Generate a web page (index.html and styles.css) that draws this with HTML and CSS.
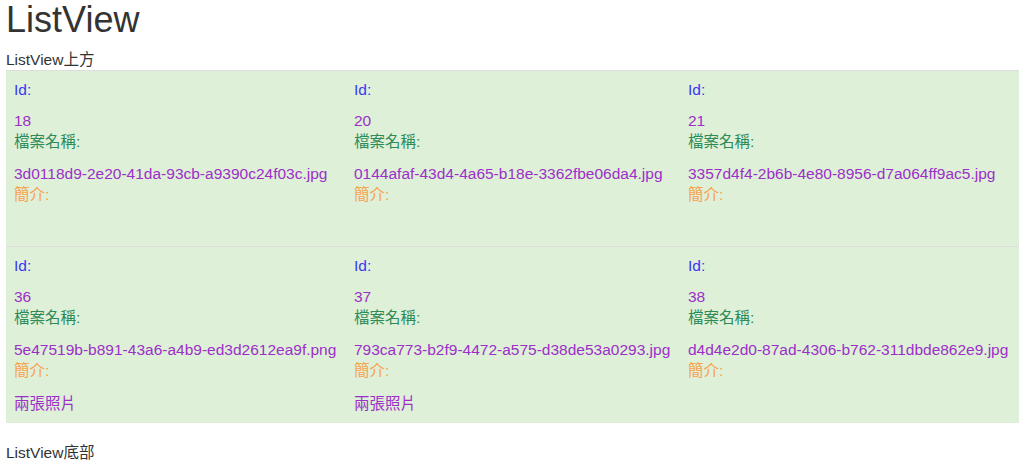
FILE: index.html
```html
<!DOCTYPE html>
<html lang="zh-Hant">
<head>
<meta charset="utf-8">
<title>ListView</title>
<link rel="stylesheet" href="styles.css">
</head>
<body>
<div class="page">
  <h1 class="title">ListView</h1>
  <div class="caption">ListView上方</div>
  <table class="list">
    <colgroup>
      <col class="c1"><col class="c2"><col class="c3">
    </colgroup>
    <tbody>
      <tr>
        <td class="item">
          <p class="lbl lbl-id">Id:</p>
          <div class="val">18</div>
          <p class="lbl lbl-name">檔案名稱:</p>
          <div class="val">3d0118d9-2e20-41da-93cb-a9390c24f03c.jpg</div>
          <p class="lbl lbl-desc">簡介:</p>
          <div class="val"></div>
        </td>
        <td class="item">
          <p class="lbl lbl-id">Id:</p>
          <div class="val">20</div>
          <p class="lbl lbl-name">檔案名稱:</p>
          <div class="val">0144afaf-43d4-4a65-b18e-3362fbe06da4.jpg</div>
          <p class="lbl lbl-desc">簡介:</p>
          <div class="val"></div>
        </td>
        <td class="item">
          <p class="lbl lbl-id">Id:</p>
          <div class="val">21</div>
          <p class="lbl lbl-name">檔案名稱:</p>
          <div class="val">3357d4f4-2b6b-4e80-8956-d7a064ff9ac5.jpg</div>
          <p class="lbl lbl-desc">簡介:</p>
          <div class="val"></div>
        </td>
      </tr>
      <tr>
        <td class="item">
          <p class="lbl lbl-id">Id:</p>
          <div class="val">36</div>
          <p class="lbl lbl-name">檔案名稱:</p>
          <div class="val">5e47519b-b891-43a6-a4b9-ed3d2612ea9f.png</div>
          <p class="lbl lbl-desc">簡介:</p>
          <div class="val val-cjk">兩張照片</div>
        </td>
        <td class="item">
          <p class="lbl lbl-id">Id:</p>
          <div class="val">37</div>
          <p class="lbl lbl-name">檔案名稱:</p>
          <div class="val">793ca773-b2f9-4472-a575-d38de53a0293.jpg</div>
          <p class="lbl lbl-desc">簡介:</p>
          <div class="val val-cjk">兩張照片</div>
        </td>
        <td class="item">
          <p class="lbl lbl-id">Id:</p>
          <div class="val">38</div>
          <p class="lbl lbl-name">檔案名稱:</p>
          <div class="val">d4d4e2d0-87ad-4306-b762-311dbde862e9.jpg</div>
          <p class="lbl lbl-desc">簡介:</p>
          <div class="val"></div>
        </td>
      </tr>
    </tbody>
  </table>
  <div class="caption">ListView底部</div>
</div>
</body>
</html>
```

FILE: styles.css
```css
html, body {
  margin: 0;
  padding: 0;
  background: #fff;
}

body {
  font-family: "Liberation Sans", "Noto Sans CJK TC", sans-serif;
  font-size: 15.5px;
  line-height: 21px;
  color: #333;
}

.page {
  padding: 0 5px 0 6px;
}

.title {
  margin: 0 0 10px;
  font-size: 36px;
  line-height: 1.1;
  font-weight: 500;
  color: #333;
}

.caption {
  line-height: 20px;
}

.list {
  width: 100%;
  border-collapse: collapse;
  border-spacing: 0;
  table-layout: fixed;
  background: #dff0d8;
  margin-bottom: 20px;
}

.c1 { width: 340px; }
.c2 { width: 334px; }
.c3 { width: 339px; }

.item {
  padding: 8px;
  vertical-align: top;
  border-top: 1px solid #ddd;
  white-space: nowrap;
}

.lbl {
  margin: 0 0 10px;
}

.lbl-id {
  color: #3838f4;
  line-height: 21px;
}

.lbl-name {
  color: #2e8b57;
  line-height: 22.5px;
  margin-bottom: 10px;
}

.lbl-desc {
  color: #f8a14e;
  line-height: 22.5px;
}

.lbl-name,
.lbl-desc {
  margin-top: 0;
}

.val {
  color: #9b2fc8;
  min-height: 21px;
}

.val-cjk {
  line-height: 22.5px;
}
```
